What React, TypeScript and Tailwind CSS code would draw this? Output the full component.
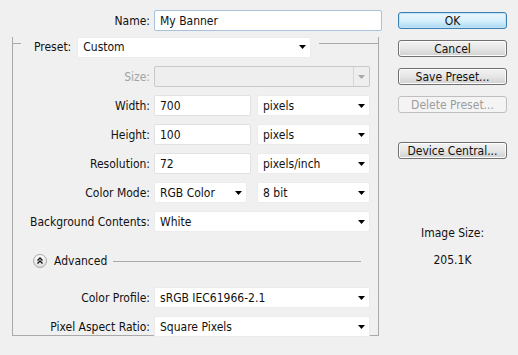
import type { ReactNode } from "react";

const font = { fontFamily: '"DejaVu Sans Condensed", "DejaVu Sans", sans-serif' };

function Arrow({ disabled }: { disabled?: boolean }) {
  return (
    <svg width="7" height="4" viewBox="0 0 7 4" className="shrink-0">
      <path d="M0 0H7L3.5 4Z" fill={disabled ? "#a8a8a8" : "#000"} />
    </svg>
  );
}

function Select({ value, w, disabled }: { value?: string; w: string; disabled?: boolean }) {
  if (disabled) {
    return (
      <div className={`${w} flex h-[21px] items-stretch rounded-[2px] border border-[#c9c9c9] bg-[#eeeeee]`}>
        <div className="flex-1" />
        <div className="flex w-[16px] items-center justify-center border-l border-[#d6d6d6]">
          <Arrow disabled />
        </div>
      </div>
    );
  }
  return (
    <div className={`${w} flex h-[21px] items-center rounded-[2px] border border-[#ececec] bg-white pl-[5px] pr-[4px]`}>
      <span className="flex-1 truncate">{value}</span>
      <Arrow />
    </div>
  );
}

function Input({ value, w, focus }: { value: string; w: string; focus?: boolean }) {
  return (
    <div
      className={`${w} flex h-[21px] items-center rounded-[2px] border bg-white pl-[5px] ${
        focus ? "border-[#a9c2dc]" : "border-[#e1e1e1]"
      }`}
    >
      {value}
    </div>
  );
}

function Row({ label, children, muted }: { label: string; children: ReactNode; muted?: boolean }) {
  return (
    <div className="flex h-[21px] items-center gap-[4px]">
      <div className={`w-[137px] text-right ${muted ? "text-[#a3a3a3]" : ""}`}>{label}</div>
      <div className="flex items-center gap-[6px]">{children}</div>
    </div>
  );
}

function Button({ label, primary, disabled }: { label: string; primary?: boolean; disabled?: boolean }) {
  const tone = disabled
    ? "border-[#bfbfbf] bg-[#f4f4f4] text-[#9d9d9d]"
    : primary
      ? "border-[#3c7fb1] bg-gradient-to-b from-[#eaf6fd] via-[#d9f0fc] to-[#a7d9f5] shadow-[inset_0_0_0_1px_#c3e2f5]"
      : "border-[#707070] bg-gradient-to-b from-[#f2f2f2] via-[#e6e6e6] to-[#d0d0d0] shadow-[inset_0_0_0_1px_#fcfcfc]";
  return (
    <div className={`flex h-[17px] w-[109px] items-center justify-center rounded-[3px] border leading-none ${tone}`}>
      {label}
    </div>
  );
}

function AdvancedIcon() {
  return (
    <svg width="14" height="14" viewBox="0 0 14 14" className="shrink-0">
      <defs>
        <linearGradient id="adv" x1="0" y1="0" x2="0" y2="1">
          <stop offset="0" stopColor="#ffffff" />
          <stop offset="1" stopColor="#dcdcdc" />
        </linearGradient>
      </defs>
      <circle cx="7" cy="7" r="6.5" fill="url(#adv)" stroke="#a7a7a7" />
      <path d="M4.5 6.5L7 4L9.5 6.5M4.5 9.5L7 7L9.5 9.5" fill="none" stroke="#111" strokeWidth="1.3" />
    </svg>
  );
}

export default function App() {
  return (
    <div className="flex h-[355px] w-[518px] bg-[#f0f0f0] text-[12px] text-[#111]" style={font}>
      <div className="w-[398px] pt-[10px]">
        <div className="flex items-center gap-[4px]">
          <div className="w-[150px] text-right">Name:</div>
          <Input value="My Banner" w="w-[228px]" focus />
        </div>

        <div className="ml-[12px] mt-[12px] h-[299px] w-[367px] border-b border-l border-r border-[#a9a9a9]">
          <div className="-mt-[6px] flex items-start">
            <div className="mt-[6px] w-[8px] border-t border-[#a9a9a9]" />
            <div className="ml-[13px] flex h-[20px] items-center gap-[6px]">
              <span>Preset:</span>
              <Select value="Custom" w="w-[234px]" />
            </div>
            <div className="ml-[8px] mt-[6px] flex-1 border-t border-[#a9a9a9]" />
          </div>

          <div className="mt-[9px] flex flex-col gap-[8px]">
            <Row label="Size:" muted>
              <Select w="w-[216px]" disabled />
            </Row>
            <Row label="Width:">
              <Input value="700" w="w-[97px]" />
              <Select value="pixels" w="w-[113px]" />
            </Row>
            <Row label="Height:">
              <Input value="100" w="w-[97px]" />
              <Select value="pixels" w="w-[113px]" />
            </Row>
            <Row label="Resolution:">
              <Input value="72" w="w-[97px]" />
              <Select value="pixels/inch" w="w-[113px]" />
            </Row>
            <Row label="Color Mode:">
              <Select value="RGB Color" w="w-[93px]" />
              <div className="ml-[4px]">
                <Select value="8 bit" w="w-[113px]" />
              </div>
            </Row>
            <Row label="Background Contents:">
              <Select value="White" w="w-[216px]" />
            </Row>
          </div>

          <div className="mt-[22px] flex h-[14px] items-center">
            <div className="ml-[20px]">
              <AdvancedIcon />
            </div>
            <span className="ml-[7px]">Advanced</span>
            <div className="ml-[6px] mr-[17px] flex-1 border-t border-[#a9a9a9]" />
          </div>

          <div className="mt-[19px] flex flex-col gap-[8px]">
            <Row label="Color Profile:">
              <Select value="sRGB IEC61966-2.1" w="w-[216px]" />
            </Row>
            <Row label="Pixel Aspect Ratio:">
              <Select value="Square Pixels" w="w-[216px]" />
            </Row>
          </div>
        </div>
      </div>

      <div className="flex w-[109px] flex-col pt-[12px]">
        <div className="flex flex-col gap-[11px]">
          <Button label="OK" primary />
          <Button label="Cancel" />
          <Button label="Save Preset..." />
          <Button label="Delete Preset..." disabled />
        </div>
        <div className="mt-[29px]">
          <Button label="Device Central..." />
        </div>
        <div className="mt-[65px] text-center">Image Size:</div>
        <div className="mt-[9px] text-center">205.1K</div>
      </div>
    </div>
  );
}
